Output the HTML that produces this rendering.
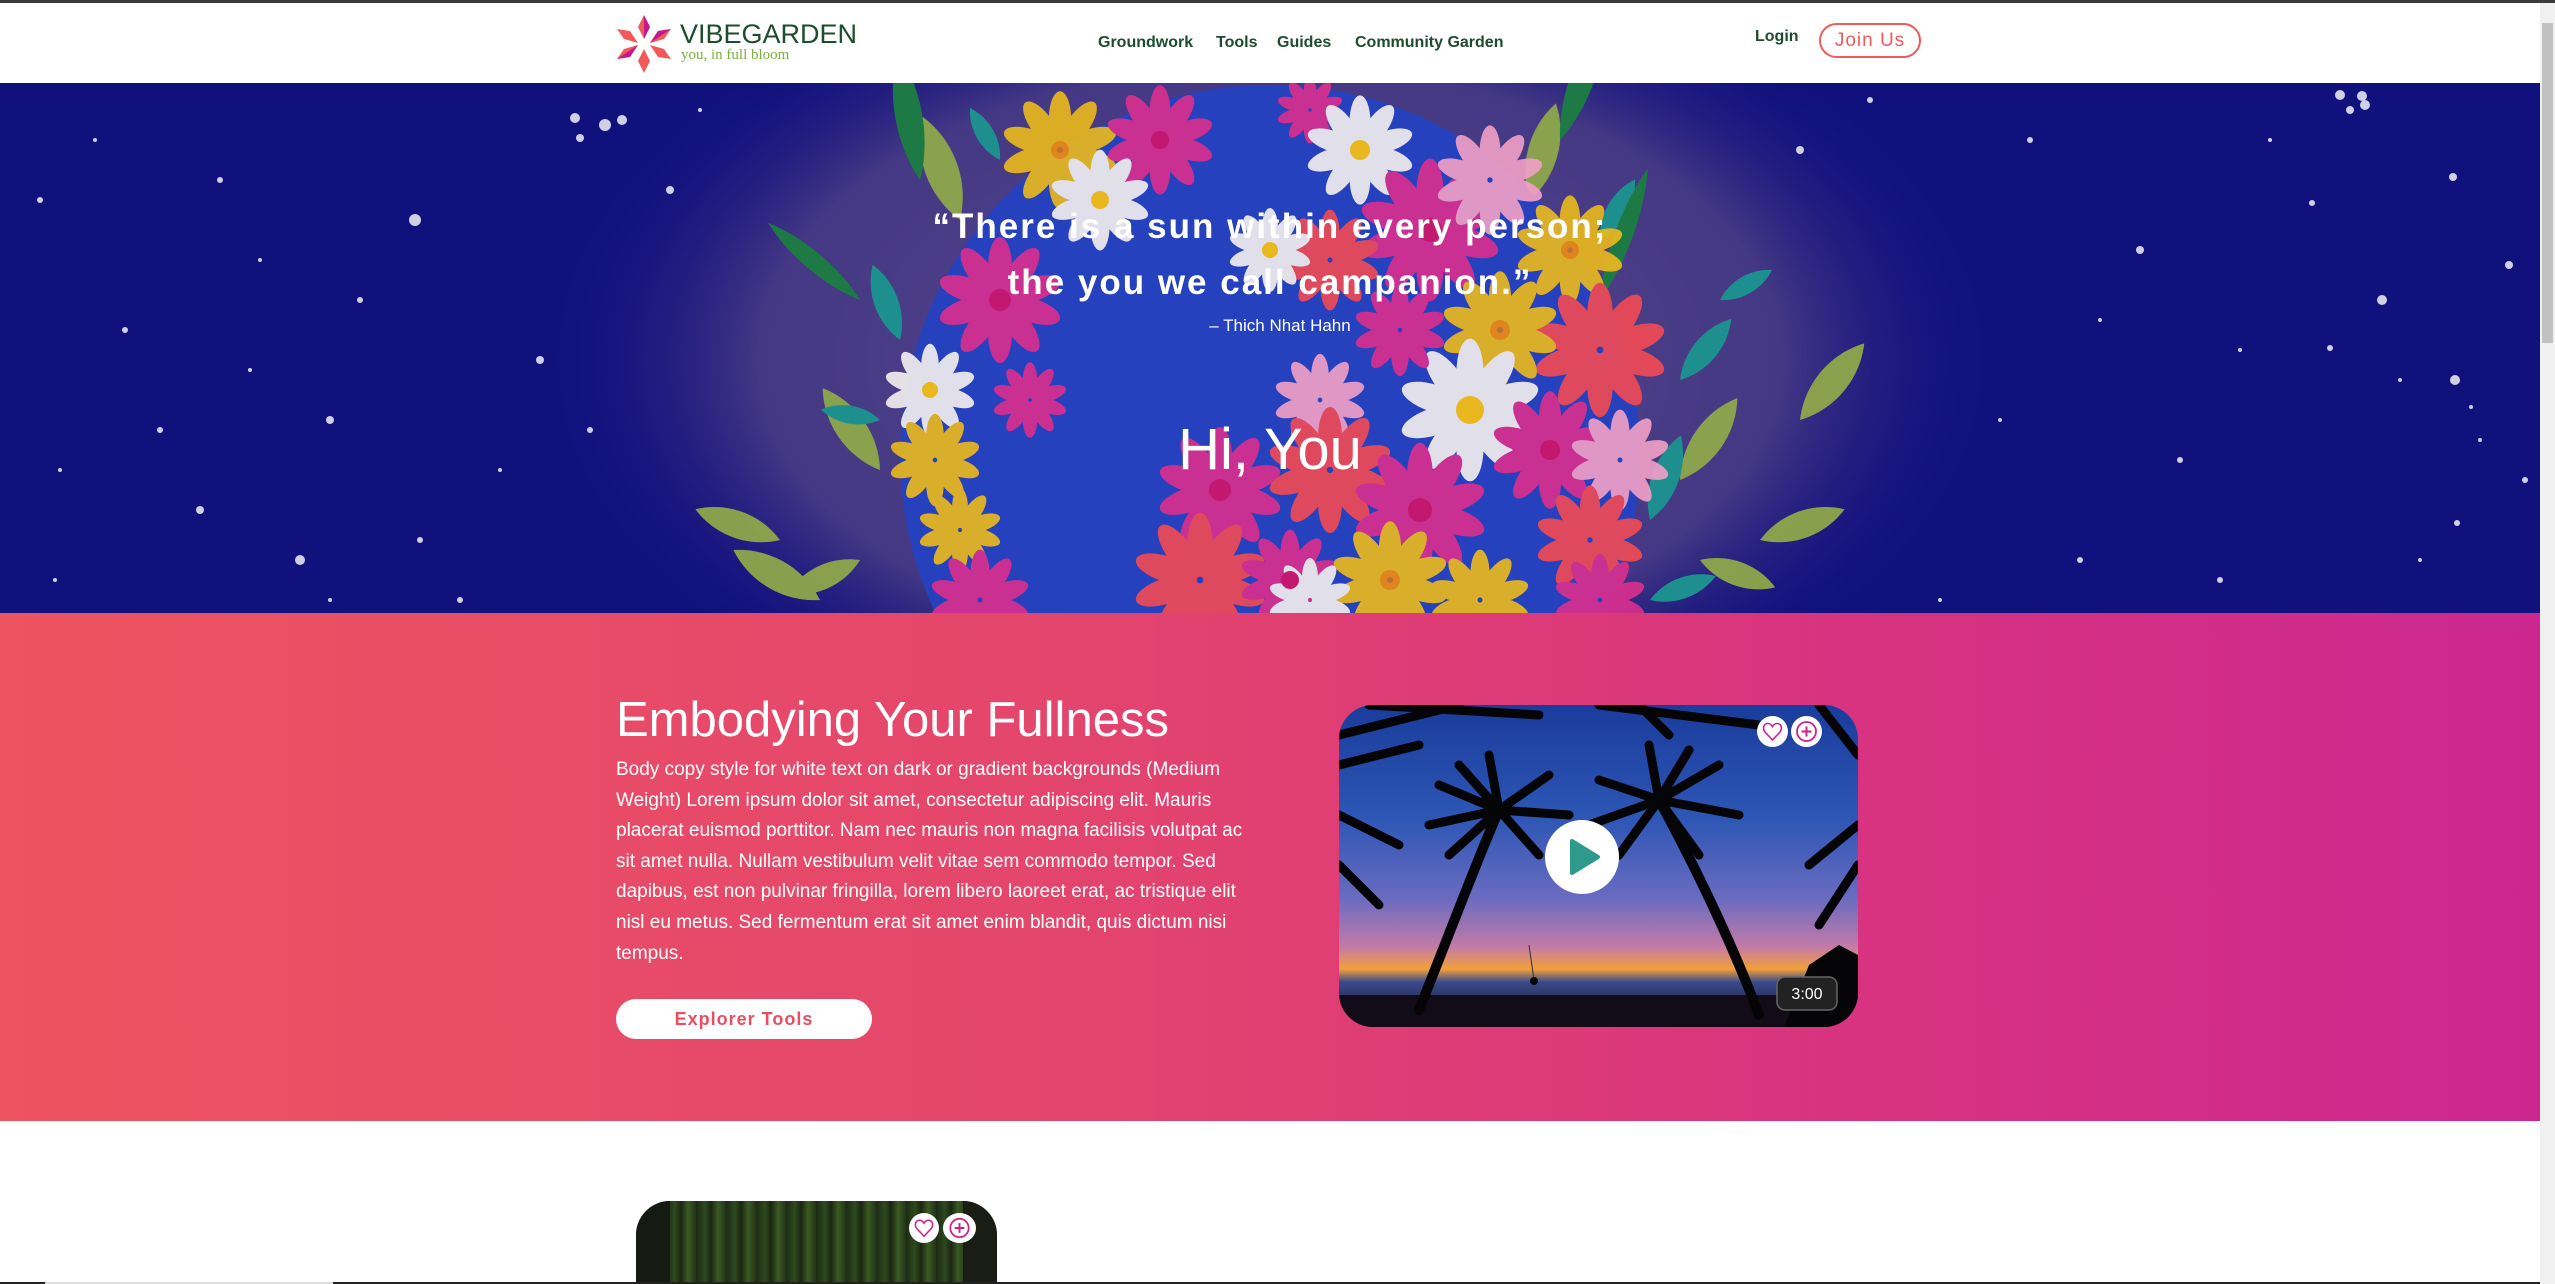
<!DOCTYPE html>
<html><head><meta charset="utf-8"><style>
*{margin:0;padding:0;box-sizing:border-box}
html,body{width:2555px;height:1284px;overflow:hidden;background:#fff;font-family:"Liberation Sans",sans-serif}
.topbar{position:absolute;left:0;top:0;width:2555px;height:3px;background:#3a3a3a}
.sb{position:absolute;left:2540px;top:3px;width:15px;height:1281px;background:#f0f0f0}
.sb .th{position:absolute;left:2px;top:20px;width:11px;height:320px;background:#c1c1c1}
.header{position:absolute;left:0;top:3px;width:2540px;height:80px;background:#fff}
.nav a{position:absolute;top:31px;font-size:16px;font-weight:bold;color:#1d4d2c;text-decoration:none}
.hero{position:absolute;left:0;top:83px;width:2540px;height:530px;overflow:hidden;background:#11117e}
.pink{position:absolute;left:0;top:613px;width:2540px;height:508px;background:linear-gradient(90deg,#ee5360 0%,#e4466c 40%,#d9347e 70%,#cc2790 100%)}
h1{position:absolute;left:616px;top:692px;font-size:49px;font-weight:normal;color:#fff;white-space:nowrap}
.body{position:absolute;left:616px;top:755px;font-size:19px;line-height:30.6px;color:#fff;white-space:nowrap}
.btn{position:absolute;left:616px;top:999px;width:256px;height:40px;border-radius:20px;background:#fff;color:#ec4d63;font-weight:bold;font-size:18px;text-align:center;line-height:40px;letter-spacing:1px}
.video{position:absolute;left:1339px;top:705px;width:519px;height:322px;border-radius:34px;overflow:hidden}
.ic{position:absolute;width:31px;height:31px;border-radius:50%;background:#fff}
</style></head><body>
<div class="topbar"></div>
<div class="header">
 <svg style="position:absolute;left:614px;top:10px" width="60" height="62" viewBox="0 0 60 62">
  <g fill="#f25a5a">
   <path d="M30 2 L36 14 L30 26 L24 14Z"/><path d="M30 36 L36 48 L30 60 L24 48Z"/>
   <path d="M3 16 L16 18 L24 30 L10 26Z"/><path d="M57 16 L44 18 L36 30 L50 26Z"/>
   <path d="M3 46 L16 44 L24 32 L10 36Z"/><path d="M57 46 L44 44 L36 32 L50 36Z"/>
  </g>
  <g fill="#c21a8e"><path d="M30 2 L36 14 L30 26Z"/><path d="M57 16 L44 18 L36 30Z"/><path d="M3 46 L16 44 L24 32Z"/></g>
 </svg>
 <div style="position:absolute;left:680px;top:16px;font-size:27px;color:#1d4d2c;letter-spacing:0px">VIBEGARDEN</div>
 <div style="position:absolute;left:681px;top:44px;font-size:15px;color:#7ab03c;font-family:'Liberation Serif',serif">you, in full bloom</div>
 <div class="nav">
  <a style="left:1098px">Groundwork</a><a style="left:1216px">Tools</a><a style="left:1277px">Guides</a><a style="left:1355px">Community Garden</a>
  <a style="left:1755px;top:25px">Login</a>
 </div>
 <div style="position:absolute;left:1819px;top:20px;width:102px;height:35px;border:2px solid #f25a5a;border-radius:18px;color:#f25a5a;font-size:19px;text-align:center;line-height:31px;letter-spacing:1px">Join Us</div>
</div>

<div class="hero">
<svg width="2540" height="530" viewBox="0 83 2540 530" style="position:absolute;left:0;top:0">
 <defs>
  <radialGradient id="haze" cx="50%" cy="50%" r="50%"><stop offset="0" stop-color="#5a4a8a"/><stop offset="0.7" stop-color="#4a3c85" stop-opacity="0.9"/><stop offset="1" stop-color="#11117e" stop-opacity="0"/></radialGradient>
  <g id="f"><ellipse cx="0" cy="-22" rx="8" ry="20"/><ellipse cx="0" cy="-22" rx="8" ry="20" transform="rotate(36)"/><ellipse cx="0" cy="-22" rx="8" ry="20" transform="rotate(72)"/><ellipse cx="0" cy="-22" rx="8" ry="20" transform="rotate(108)"/><ellipse cx="0" cy="-22" rx="8" ry="20" transform="rotate(144)"/><ellipse cx="0" cy="-22" rx="8" ry="20" transform="rotate(180)"/><ellipse cx="0" cy="-22" rx="8" ry="20" transform="rotate(216)"/><ellipse cx="0" cy="-22" rx="8" ry="20" transform="rotate(252)"/><ellipse cx="0" cy="-22" rx="8" ry="20" transform="rotate(288)"/><ellipse cx="0" cy="-22" rx="8" ry="20" transform="rotate(324)"/></g>
  <g id="lf"><path d="M0 0 C20 -30 20 -70 0 -100 C-20 -70 -20 -30 0 0Z"/></g>
 </defs>
 <ellipse cx="1270" cy="360" rx="730" ry="420" fill="url(#haze)"/>
 <g fill="#fff" opacity="0.8">
  <circle cx="575" cy="118" r="5"/><circle cx="605" cy="125" r="6"/><circle cx="622" cy="120" r="5"/><circle cx="580" cy="138" r="4"/><circle cx="415" cy="220" r="6"/><circle cx="330" cy="420" r="4"/><circle cx="300" cy="560" r="5"/><circle cx="200" cy="510" r="4"/><circle cx="125" cy="330" r="3"/><circle cx="40" cy="200" r="3"/><circle cx="95" cy="140" r="2"/><circle cx="220" cy="180" r="3"/><circle cx="360" cy="300" r="3"/><circle cx="420" cy="540" r="3"/><circle cx="460" cy="600" r="3"/><circle cx="540" cy="360" r="4"/><circle cx="590" cy="430" r="3"/><circle cx="670" cy="190" r="4"/><circle cx="260" cy="260" r="2"/><circle cx="160" cy="430" r="3"/><circle cx="60" cy="470" r="2"/><circle cx="330" cy="600" r="2"/><circle cx="500" cy="470" r="2"/><circle cx="700" cy="110" r="2"/><circle cx="55" cy="580" r="2"/><circle cx="250" cy="370" r="2"/>
  <circle cx="2340" cy="95" r="5"/><circle cx="2350" cy="110" r="4"/><circle cx="2362" cy="96" r="5"/><circle cx="2365" cy="105" r="5"/><circle cx="2453" cy="177" r="4"/><circle cx="2382" cy="300" r="5"/><circle cx="2509" cy="265" r="4"/><circle cx="2312" cy="203" r="3"/><circle cx="2455" cy="380" r="5"/><circle cx="2330" cy="348" r="3"/><circle cx="2400" cy="380" r="2"/><circle cx="2471" cy="407" r="2"/><circle cx="2525" cy="480" r="3"/><circle cx="2480" cy="440" r="2"/><circle cx="2457" cy="523" r="3"/><circle cx="2240" cy="350" r="2"/><circle cx="2140" cy="250" r="4"/><circle cx="2180" cy="460" r="3"/><circle cx="2080" cy="560" r="3"/><circle cx="2030" cy="140" r="3"/><circle cx="2100" cy="320" r="2"/><circle cx="2000" cy="420" r="2"/><circle cx="1940" cy="600" r="2"/><circle cx="2220" cy="580" r="3"/><circle cx="2270" cy="140" r="2"/><circle cx="1870" cy="100" r="3"/><circle cx="1800" cy="150" r="4"/><circle cx="2420" cy="560" r="2"/>
 </g>
 <g fill="#8fa84a" opacity="0.95">
  <use href="#lf" transform="translate(780 540) rotate(-70) scale(0.9)"/><use href="#lf" transform="translate(880 470) rotate(-35) scale(1)"/><use href="#lf" transform="translate(860 560) rotate(-115) scale(0.8)"/><use href="#lf" transform="translate(960 220) rotate(-20) scale(1.1)"/><use href="#lf" transform="translate(820 600) rotate(-60) scale(1)"/>
  <use href="#lf" transform="translate(1760 540) rotate(70) scale(0.9)"/><use href="#lf" transform="translate(1680 480) rotate(35) scale(1)"/><use href="#lf" transform="translate(1700 560) rotate(110) scale(0.8)"/><use href="#lf" transform="translate(1530 200) rotate(15) scale(1)"/><use href="#lf" transform="translate(1800 420) rotate(40) scale(1)"/>
 </g>
 <g fill="#1d8f8f">
  <use href="#lf" transform="translate(900 340) rotate(-20) scale(0.8)"/><use href="#lf" transform="translate(880 420) rotate(-80) scale(0.6)"/><use href="#lf" transform="translate(1680 380) rotate(40) scale(0.8)"/><use href="#lf" transform="translate(1720 300) rotate(60) scale(0.6)"/><use href="#lf" transform="translate(1650 600) rotate(70) scale(0.7)"/><use href="#lf" transform="translate(1600 240) rotate(30) scale(0.7)"/><use href="#lf" transform="translate(1000 160) rotate(-30) scale(0.6)"/><use href="#lf" transform="translate(1650 520) rotate(20) scale(0.9)"/>
 </g>
 <g fill="#1e7a45"><use href="#lf" transform="translate(920 180) rotate(-10) scale(0.9,1.3)"/><use href="#lf" transform="translate(1560 140) rotate(20) scale(0.8,1.3)"/><use href="#lf" transform="translate(860 300) rotate(-50) scale(0.6,1.2)"/><use href="#lf" transform="translate(1600 300) rotate(20) scale(0.6,1.4)"/></g>
 <circle cx="1270" cy="455" r="370" fill="#2541bd"/>
 <g opacity="0.92">
  <use href="#f" fill="#e9b81e" transform="translate(1060 150) scale(1.4)"/><use href="#f" fill="#d82f8e" transform="translate(1160 140) scale(1.3)"/><use href="#f" fill="#f2eeee" transform="translate(1100 200) scale(1.2)"/><use href="#f" fill="#d82f8e" transform="translate(1310 110) scale(0.8)"/>
  <use href="#f" fill="#d82f8e" transform="translate(1000 300) scale(1.5)"/><use href="#f" fill="#f2eeee" transform="translate(930 390) scale(1.1)"/><use href="#f" fill="#e9b81e" transform="translate(935 460) scale(1.1)"/><use href="#f" fill="#d82f8e" transform="translate(1030 400) scale(0.9)"/><use href="#f" fill="#e9b81e" transform="translate(960 530) scale(1)"/>
  <use href="#f" fill="#f2eeee" transform="translate(1360 150) scale(1.3)"/><use href="#f" fill="#d82f8e" transform="translate(1430 230) scale(1.7)"/><use href="#f" fill="#ef9fc6" transform="translate(1490 180) scale(1.3)"/><use href="#f" fill="#e9b81e" transform="translate(1570 250) scale(1.3)"/><use href="#f" fill="#ef4a55" transform="translate(1330 260) scale(1.2)"/><use href="#f" fill="#f2eeee" transform="translate(1270 250) scale(1)"/>
  <use href="#f" fill="#ef4a55" transform="translate(1600 350) scale(1.6)"/><use href="#f" fill="#e9b81e" transform="translate(1500 330) scale(1.4)"/><use href="#f" fill="#f2eeee" transform="translate(1470 410) scale(1.7)"/><use href="#f" fill="#d82f8e" transform="translate(1550 450) scale(1.4)"/><use href="#f" fill="#ef9fc6" transform="translate(1620 460) scale(1.2)"/><use href="#f" fill="#ef4a55" transform="translate(1590 540) scale(1.3)"/><use href="#f" fill="#d82f8e" transform="translate(1400 330) scale(1.1)"/><use href="#f" fill="#d82f8e" transform="translate(1600 600) scale(1.1)"/>
  <use href="#f" fill="#ef9fc6" transform="translate(1320 400) scale(1.1)"/><use href="#f" fill="#d82f8e" transform="translate(1220 490) scale(1.5)"/><use href="#f" fill="#ef4a55" transform="translate(1330 470) scale(1.5)"/><use href="#f" fill="#d82f8e" transform="translate(1420 510) scale(1.6)"/><use href="#f" fill="#ef4a55" transform="translate(1200 580) scale(1.6)"/><use href="#f" fill="#d82f8e" transform="translate(1290 580) scale(1.2)"/><use href="#f" fill="#e9b81e" transform="translate(1390 580) scale(1.4)"/><use href="#f" fill="#f2eeee" transform="translate(1310 600) scale(1)"/><use href="#f" fill="#d82f8e" transform="translate(980 600) scale(1.2)"/><use href="#f" fill="#e9b81e" transform="translate(1480 600) scale(1.2)"/>
 </g>
 <g fill="#c2186f">
  <circle cx="1160" cy="140" r="9"/><circle cx="1000" cy="300" r="11"/><circle cx="1430" cy="230" r="12"/><circle cx="1550" cy="450" r="10"/><circle cx="1220" cy="490" r="11"/><circle cx="1420" cy="510" r="12"/><circle cx="1290" cy="580" r="9"/>
 </g>
 <g fill="#e9b81e"><circle cx="1360" cy="150" r="10"/><circle cx="1470" cy="410" r="14"/><circle cx="1100" cy="200" r="9"/><circle cx="930" cy="390" r="8"/><circle cx="1270" cy="250" r="8"/></g>
 <g fill="#e07a1a" opacity="0.8"><circle cx="1060" cy="150" r="9"/><circle cx="1570" cy="250" r="9"/><circle cx="1500" cy="330" r="10"/><circle cx="1390" cy="580" r="10"/></g>
</svg>
 <div style="position:absolute;left:0;width:2540px;top:116px;text-align:center;color:#fff;font-weight:bold;font-size:35px;letter-spacing:2px;line-height:56px">“There is a sun within every person;<br>the you we call campanion.”</div>
 <div style="position:absolute;left:0;width:2540px;top:233px;text-align:center;color:#fff;font-size:17px;padding-left:20px">– Thich Nhat Hahn</div>
 <div style="position:absolute;left:0;width:2540px;top:333px;text-align:center;color:#fff;font-size:58px">Hi, You</div>
</div>

<div class="pink"></div>
<h1>Embodying Your Fullness</h1>
<div class="body">Body copy style for white text on dark or gradient backgrounds (Medium<br>Weight) Lorem ipsum dolor sit amet, consectetur adipiscing elit. Mauris<br>placerat euismod porttitor. Nam nec mauris non magna facilisis volutpat ac<br>sit amet nulla. Nullam vestibulum velit vitae sem commodo tempor. Sed<br>dapibus, est non pulvinar fringilla, lorem libero laoreet erat, ac tristique elit<br>nisl eu metus. Sed fermentum erat sit amet enim blandit, quis dictum nisi<br>tempus.</div>
<div class="btn">Explorer Tools</div>

<div class="video">
 <svg width="519" height="322" viewBox="0 0 519 322">
  <defs><linearGradient id="sky" x1="0" y1="0" x2="0" y2="1">
   <stop offset="0" stop-color="#1a3c9c"/><stop offset="0.35" stop-color="#2d56b5"/><stop offset="0.6" stop-color="#6a6bc0"/><stop offset="0.75" stop-color="#c27aa8"/><stop offset="0.82" stop-color="#f3a03a"/><stop offset="0.86" stop-color="#3a4a8a"/><stop offset="1" stop-color="#101020"/></linearGradient></defs>
  <rect width="519" height="322" fill="url(#sky)"/>
  <rect y="290" width="519" height="32" fill="#120c18"/>
  <g stroke="#050508" fill="none" stroke-linecap="round"><path d="M80 305 C110 230 140 150 160 105" stroke-width="10"/><path d="M420 310 C390 230 350 150 320 95" stroke-width="10"/></g>
  <g stroke="#050508" stroke-width="9" fill="none" stroke-linecap="round">
   <path d="M160 105 L100 80 M160 105 L90 120 M160 105 L110 150 M160 105 L210 70 M160 105 L230 110 M160 105 L200 150 M160 105 L150 50 M160 105 L120 60"/>
   <path d="M320 95 L260 75 M320 95 L250 120 M320 95 L280 150 M320 95 L380 60 M320 95 L400 110 M320 95 L360 150 M320 95 L310 40 M320 95 L350 45"/>
   <path d="M0 30 L120 0 M0 60 L80 40 M30 0 L200 10 M0 110 L60 140 M0 160 L40 200"/>
   <path d="M260 0 L420 20 M300 0 L330 30 M480 0 L519 50 M519 120 L470 160 M519 160 L480 220"/>
  </g>
  <path d="M445 322 L470 260 L500 240 L519 250 L519 322Z" fill="#050508"/>
  <path d="M190 240 L195 275" stroke="#333" stroke-width="1"/><circle cx="195" cy="276" r="4" fill="#050508"/>
  <circle cx="243" cy="152" r="37" fill="#fff"/>
  <path d="M233 136 L259 152 L233 168Z" fill="#2f9a8c" stroke="#2f9a8c" stroke-width="4" stroke-linejoin="round"/>
  <rect x="438" y="272" width="60" height="33" rx="8" fill="#222" stroke="#666" stroke-width="1.5"/>
  <text x="468" y="294" fill="#fff" font-size="16" text-anchor="middle" font-family="Liberation Sans,sans-serif">3:00</text>
 </svg>
 <div class="ic" style="left:418px;top:11px"><svg width="31" height="31" viewBox="0 0 31 31"><path d="M15.5 24 L8 16 C5 12 7 7.5 11 7.5 C13 7.5 14.5 9 15.5 10.5 C16.5 9 18 7.5 20 7.5 C24 7.5 26 12 23 16Z" fill="none" stroke="#d01e8e" stroke-width="1.6"/></svg></div>
 <div class="ic" style="left:452px;top:11px"><svg width="31" height="31" viewBox="0 0 31 31"><circle cx="15.5" cy="15.5" r="9.5" fill="none" stroke="#d01e8e" stroke-width="1.8"/><path d="M15.5 10.5v10M10.5 15.5h10" stroke="#d01e8e" stroke-width="2"/></svg></div>
</div>

<div style="position:absolute;left:636px;top:1201px;width:361px;height:83px;border-radius:34px 34px 0 0;overflow:hidden;background:repeating-linear-gradient(90deg,#1c2a14 0px,#2e4a1c 9px,#1a2612 15px,#3b5a22 22px,#223318 30px),#1c2a14">
 <div style="position:absolute;left:0;top:0;width:34px;height:83px;background:#151a12"></div>
 <div style="position:absolute;right:0;top:0;width:34px;height:83px;background:#1a1d14"></div>
 <div class="ic" style="left:273px;top:12px;width:30px;height:30px"><svg width="30" height="30" viewBox="0 0 31 31"><path d="M15.5 24 L8 16 C5 12 7 7.5 11 7.5 C13 7.5 14.5 9 15.5 10.5 C16.5 9 18 7.5 20 7.5 C24 7.5 26 12 23 16Z" fill="none" stroke="#d01e8e" stroke-width="1.6"/></svg></div>
 <div class="ic" style="left:307px;top:12px;width:33px;height:30px"><svg width="33" height="30" viewBox="0 0 31 31"><circle cx="15.5" cy="15.5" r="9.5" fill="none" stroke="#d01e8e" stroke-width="1.8"/><path d="M15.5 10.5v10M10.5 15.5h10" stroke="#d01e8e" stroke-width="2"/></svg></div>
</div>
<div style="position:absolute;left:0;top:1282px;width:2540px;height:2px;background:#222"></div>
<div style="position:absolute;left:45px;top:1282px;width:288px;height:2px;background:#ddd"></div>
<div class="sb"><div class="th"></div></div>
</body></html>
